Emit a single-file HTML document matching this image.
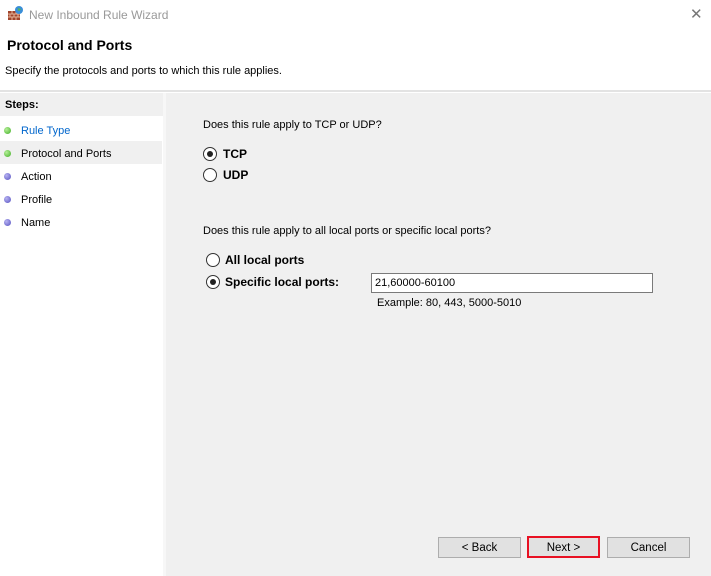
<!DOCTYPE html>
<html><head><style>
body{margin:0;width:711px;height:576px;position:relative;background:#fff;font-family:"Liberation Sans",sans-serif;font-size:11px;color:#000;overflow:hidden}
.a{position:absolute;white-space:nowrap}
.dot{position:absolute;width:7px;height:7px;border-radius:50%}
.g{background:radial-gradient(circle at 35% 35%,#b6ef9a,#3fae22)}
.b{background:radial-gradient(circle at 35% 35%,#b7b3f2,#5651c0)}
.r{position:absolute;width:12px;height:12px;border:1px solid #333;border-radius:50%;background:#fff}
.r.on::after{content:"";position:absolute;left:3px;top:3px;width:6px;height:6px;border-radius:50%;background:#222}
.btn{position:absolute;height:19px;border:1px solid #adadad;background:#e1e1e1;text-align:center;line-height:21px;font-size:11.5px}
</style></head><body>
<svg class="a" style="left:7px;top:5px" width="17" height="17" viewBox="0 0 17 17"><rect x="1" y="6" width="12" height="9" fill="#a0442c"/><path d="M1 9h12M1 12h12M5 6v3M9 6v3M3 9v3M7 9v3M11 9v3M5 12v3M9 12v3" stroke="#e6b59a" stroke-width="1"/><circle cx="12" cy="5" r="4" fill="#3a8ed8"/><path d="M10 3q2 1 1 3q2 0 3-2" fill="#5cb84a"/></svg>
<div class="a" style="left:29px;top:8px;font-size:12px;color:#999">New Inbound Rule Wizard</div>
<div class="a" style="left:690px;top:5px;font-size:15px;color:#777">✕</div>
<div class="a" style="left:7px;top:37px;font-size:14px;font-weight:bold">Protocol and Ports</div>
<div class="a" style="left:5px;top:65px">Specify the protocols and ports to which this rule applies.</div>
<div class="a" style="left:0;top:90px;width:711px;height:2px;background:#e3e3e3"></div>
<div class="a" style="left:0;top:93px;width:163px;height:483px;background:#fff"></div>
<div class="a" style="left:0;top:93px;width:163px;height:23px;background:#f0f0f0"></div>
<div class="a" style="left:5px;top:99px;font-weight:bold">Steps:</div>
<div class="a" style="left:163px;top:93px;width:3px;height:483px;background:#f7f7f7"></div>
<div class="a" style="left:166px;top:93px;width:545px;height:483px;background:#f0f0f0"></div>
<div class="a" style="left:0;top:141px;width:162px;height:23px;background:#f0f0f0"></div>
<div class="dot g" style="left:4px;top:127px"></div><div class="a" style="left:21px;top:125px;color:#0066cc">Rule Type</div>
<div class="dot g" style="left:4px;top:150px"></div><div class="a" style="left:21px;top:148px">Protocol and Ports</div>
<div class="dot b" style="left:4px;top:173px"></div><div class="a" style="left:21px;top:171px">Action</div>
<div class="dot b" style="left:4px;top:196px"></div><div class="a" style="left:21px;top:194px">Profile</div>
<div class="dot b" style="left:4px;top:219px"></div><div class="a" style="left:21px;top:217px">Name</div>
<div class="a" style="left:203px;top:119px">Does this rule apply to TCP or UDP?</div>
<div class="r on" style="left:203px;top:147px"></div><div class="a" style="left:223px;top:147px;font-weight:bold;font-size:12px">TCP</div>
<div class="r" style="left:203px;top:168px"></div><div class="a" style="left:223px;top:168px;font-weight:bold;font-size:12px">UDP</div>
<div class="a" style="left:203px;top:225px">Does this rule apply to all local ports or specific local ports?</div>
<div class="r" style="left:206px;top:253px"></div><div class="a" style="left:225px;top:253px;font-weight:bold;font-size:12px">All local ports</div>
<div class="r on" style="left:206px;top:275px"></div><div class="a" style="left:225px;top:275px;font-weight:bold;font-size:12px">Specific local ports:</div>
<div class="a" style="left:371px;top:273px;width:280px;height:18px;border:1px solid #7a7a7a;background:#fff"></div>
<div class="a" style="left:375px;top:277px">21,60000-60100</div>
<div class="a" style="left:377px;top:297px">Example: 80, 443, 5000-5010</div>
<div class="btn" style="left:438px;top:537px;width:81px">&lt; Back</div>
<div class="btn" style="left:527px;top:536px;width:69px;height:18px;line-height:20px;border:2px solid #e81123">Next &gt;</div>
<div class="btn" style="left:607px;top:537px;width:81px">Cancel</div>
</body></html>
